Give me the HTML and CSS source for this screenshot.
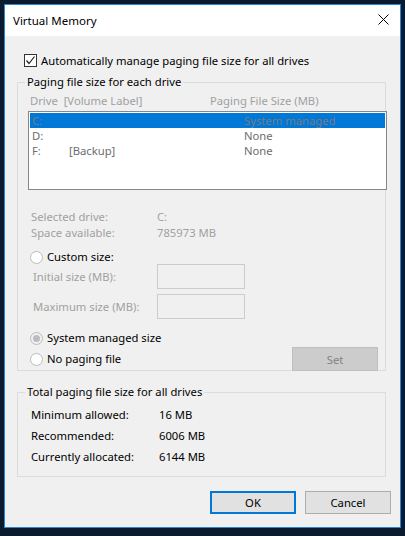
FILE: index.html
```html
<!DOCTYPE html>
<html>
<head>
<meta charset="utf-8">
<title>Virtual Memory</title>
<link rel="stylesheet" href="styles.css">
</head>
<body>
<div class="window">
  <div class="titlebar">
    <span class="title">Virtual Memory</span>
    <svg class="close" width="11" height="11" viewBox="0 0 11 11"><path d="M0.5 0.5 L10.5 10.5 M10.5 0.5 L0.5 10.5" stroke="#000" stroke-width="1" fill="none"/></svg>
  </div>
  <div class="content">
    <div class="check-row">
      <span class="checkbox"><svg width="11" height="11" viewBox="0 0 11 11"><path d="M1.5 5.5 L4 8.5 L9.5 1.5" stroke="#222" stroke-width="1.2" fill="none"/></svg></span>
      <span>Automatically manage paging file size for all drives</span>
    </div>

    <fieldset class="group group-drives">
      <legend>Paging file size for each drive</legend>
      <div class="list-header">
        <span class="col-drive">Drive&nbsp; [Volume Label]</span>
        <span class="col-size">Paging File Size (MB)</span>
      </div>
      <div class="listbox">
        <div class="list-row selected"><span class="c1">C:</span><span class="c2"></span><span class="c3">System managed</span></div>
        <div class="list-row"><span class="c1">D:</span><span class="c2"></span><span class="c3">None</span></div>
        <div class="list-row"><span class="c1">F:</span><span class="c2">[Backup]</span><span class="c3">None</span></div>
      </div>

      <div class="info">
        <div class="info-row"><span class="info-label">Selected drive:</span><span>C:</span></div>
        <div class="info-row"><span class="info-label">Space available:</span><span>785973 MB</span></div>
      </div>

      <div class="radio-row custom"><span class="radio"></span><span>Custom size:</span></div>
      <div class="field-row first"><span class="field-label">Initial size (MB):</span><span class="textbox"></span></div>
      <div class="field-row"><span class="field-label">Maximum size (MB):</span><span class="textbox"></span></div>
      <div class="radio-row sysman"><span class="radio checked"></span><span>System managed size</span></div>
      <div class="last-row">
        <div class="radio-row"><span class="radio"></span><span>No paging file</span></div>
        <span class="btn-set">Set</span>
      </div>
    </fieldset>

    <fieldset class="group group-total">
      <legend>Total paging file size for all drives</legend>
      <div class="total-row first"><span class="total-label">Minimum allowed:</span><span>16 MB</span></div>
      <div class="total-row"><span class="total-label">Recommended:</span><span>6006 MB</span></div>
      <div class="total-row"><span class="total-label">Currently allocated:</span><span>6144 MB</span></div>
    </fieldset>

    <div class="buttons">
      <span class="btn btn-ok">OK</span>
      <span class="btn btn-cancel">Cancel</span>
    </div>
  </div>
</div>
</body>
</html>
```
FILE: styles.css
```css
html, body {
  margin: 0;
  padding: 0;
  background: #0a1a2f;
  width: 405px;
  height: 536px;
  overflow: hidden;
}
body {
  font-family: "Noto Sans", "Open Sans", sans-serif;
  font-size: 11.25px;
  color: #000;
}
.window {
  margin: 4px 0 0 4px;
  width: 395px;
  height: 522px;
  border: 1px solid #2b86d6;
  background: #f0f0f0;
  display: flex;
  flex-direction: column;
}
.titlebar {
  height: 31px;
  background: #fff;
  display: flex;
  align-items: center;
  justify-content: space-between;
  padding: 0 11px 0 8px;
}
.title {
  font-size: 11.5px;
  margin-top: -1px;
}
.close { display: block; margin-top: -2px; }
.content {
  flex: 1;
  padding: 17px 9px 13px 12px;
  display: flex;
  flex-direction: column;
}
.check-row {
  height: 15px;
  display: flex;
  align-items: center;
  padding-left: 7px;
  gap: 4px;
  line-height: 15px;
}
.checkbox {
  width: 11px;
  height: 11px;
  border: 1px solid #333;
  background: #fff;
  display: flex;
}
.checkbox svg { display: block; }
.group {
  margin: 6px 0 0 0;
  padding: 0;
  width: 367px;
  border: 1px solid #dcdcdc;
  min-width: 0;
}
.group legend {
  margin-left: 7px;
  padding: 0 2px;
  line-height: 16px;
}
.group-drives {
  height: 295px;
}
.list-header {
  margin: 3px 0 0 12px;
  height: 15px;
  line-height: 15px;
  color: #a0a0a0;
  display: flex;
}
.col-drive { width: 180px; }
.listbox {
  margin: 3px -2px 0 10px;
  height: 75px;
  border: 1px solid #828790;
  background: #fff;
  padding: 1px;
}
.list-row {
  height: 15px;
  line-height: 15px;
  display: flex;
  color: #6d6d6d;
  padding-left: 2px;
}
.list-row.selected {
  background: #0078d7;
  color: #7a7a7a;
}
.c1 { width: 37px; }
.c2 { width: 175px; }
.info {
  margin: 19px 0 0 13px;
  color: #a0a0a0;
}
.info-row {
  height: 16px;
  line-height: 16px;
  display: flex;
}
.info-label { width: 126px; }
.radio-row {
  height: 14px;
  line-height: 14px;
  display: flex;
  align-items: center;
  gap: 4px;
  padding-left: 12px;
  color: #000;
}
.radio {
  width: 11px;
  height: 11px;
  border: 1px solid #bcbcbc;
  border-radius: 50%;
  background: #fff;
  display: flex;
  align-items: center;
  justify-content: center;
}
.radio.checked { background: #f0f0f0; }
.radio.checked::after {
  content: "";
  width: 7px;
  height: 7px;
  border-radius: 50%;
  background: #bcbcbc;
}
.custom { margin-top: 9px; }
.field-row {
  display: flex;
  align-items: center;
  margin-top: 5px;
  padding-left: 15px;
  color: #a0a0a0;
  height: 25px;
}
.field-row.first { margin-top: 0; }
.field-label { width: 124px; }
.textbox {
  width: 86px;
  height: 23px;
  border: 1px solid #cccccc;
  background: #f0f0f0;
}
.sysman { margin-top: 12px; }
.last-row {
  margin-top: 2px;
  display: flex;
  align-items: center;
  justify-content: space-between;
  padding-right: 7px;
  height: 24px;
}
.last-row .radio-row { padding-left: 12px; }
.btn-set {
  width: 84px;
  height: 22px;
  border: 1px solid #bfbfbf;
  background: #cccccc;
  color: #838383;
  display: flex;
  align-items: center;
  justify-content: center;
}
.group-total {
  margin-top: 13px;
  height: 91px;
}
.total-row {
  height: 21px;
  line-height: 21px;
  display: flex;
  padding-left: 13px;
}
.total-row.first { margin-top: 4px; }
.total-label { width: 128px; }
.buttons {
  margin-top: auto;
  display: flex;
  justify-content: flex-end;
  gap: 9px;
}
.btn {
  width: 84px;
  height: 21px;
  border: 1px solid #adadad;
  background: #e1e1e1;
  display: flex;
  align-items: center;
  justify-content: center;
}
.btn-ok {
  width: 82px;
  height: 19px;
  border: 2px solid #0078d7;
}
```
